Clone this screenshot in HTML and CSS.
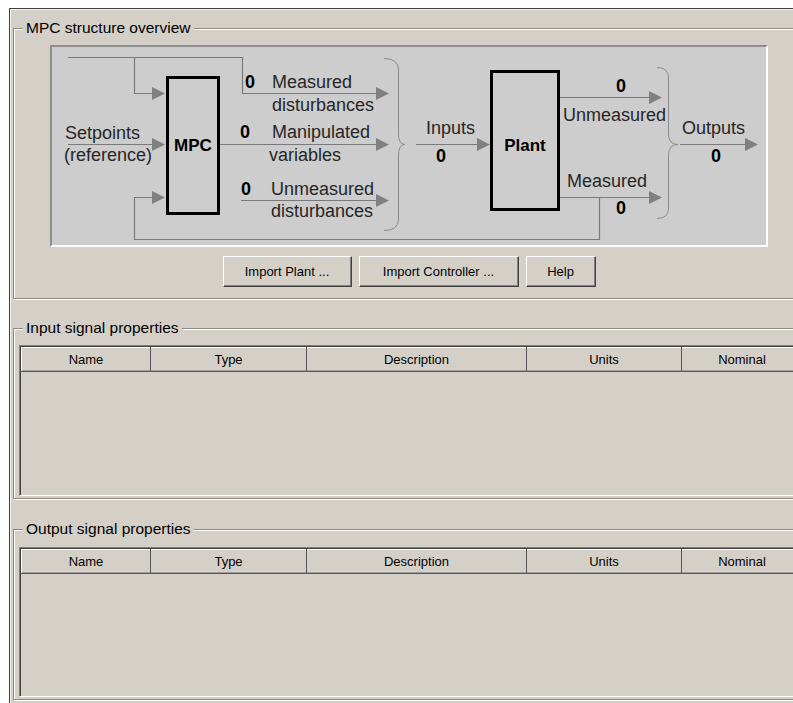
FILE: index.html
```html
<!DOCTYPE html>
<html lang="en">
<head>
    <meta charset="UTF-8">
    <title>MPC structure overview</title>
    <link rel="stylesheet" href="styles.css">
</head>
<body>
<div class="frame">

    <fieldset class="group group-overview">
        <legend>MPC structure overview</legend>

        <div class="diagram">
            <svg width="714" height="198" viewBox="0 0 714 198">
                <g transform="translate(-52 -47)">
                    <!-- wires -->
                    <g class="wire">
                        <path d="M68 57.5 H242.5 V93.5 H377"/>
                        <path d="M134.5 57.5 V93.5 H153"/>
                        <path d="M68 144.5 H153"/>
                        <path d="M220 144.5 H377"/>
                        <path d="M241 200.5 H377"/>
                        <path d="M560 197.5 H599.5 V239.5 H134.5 V197.5 H153"/>
                        <path d="M416 144.5 H478"/>
                        <path d="M560 97.5 H650"/>
                        <path d="M560 197.5 H650"/>
                        <path d="M680 144.5 H746"/>
                    </g>
                    <!-- arrow heads -->
                    <g class="head">
                        <polygon points="152,87 165,93.5 152,100"/>
                        <polygon points="152,138 165,144.5 152,151"/>
                        <polygon points="152,191 165,197.5 152,204"/>
                        <polygon points="376,87 389,93.5 376,100"/>
                        <polygon points="376,138 389,144.5 376,151"/>
                        <polygon points="376,194 389,200.5 376,207"/>
                        <polygon points="477,138 490,144.5 477,151"/>
                        <polygon points="649,91 662,97.5 649,104"/>
                        <polygon points="649,191 662,197.5 649,204"/>
                        <polygon points="745,138 758,144.5 745,151"/>
                    </g>
                    <!-- braces -->
                    <g class="brace">
                        <path d="M384 58.5 Q398.5 58.5 398.5 70 V134 Q398.5 144.5 405 144.5 Q398.5 144.5 398.5 155 V219 Q398.5 230.5 384 230.5"/>
                        <path d="M657 67.5 Q668.5 67.5 668.5 78 V134 Q668.5 144.5 678 144.5 Q668.5 144.5 668.5 155 V208 Q668.5 218.5 657 218.5"/>
                    </g>
                    <!-- blocks -->
                    <rect class="block" x="167.5" y="77.5" width="51" height="136"/>
                    <rect class="block" x="491.5" y="71.5" width="67" height="138"/>
                    <text class="block-name" x="193" y="151">MPC</text>
                    <text class="block-name" x="525" y="151">Plant</text>

                    <!-- labels -->
                    <text class="label" x="65" y="139">Setpoints</text>
                    <text class="label" x="64" y="161">(reference)</text>

                    <text class="count" x="245" y="88">0</text>
                    <text class="label" x="272" y="88">Measured</text>
                    <text class="label" x="272" y="111">disturbances</text>

                    <text class="count" x="240" y="138">0</text>
                    <text class="label" x="272" y="138">Manipulated</text>
                    <text class="label" x="269" y="161">variables</text>

                    <text class="count" x="241" y="195">0</text>
                    <text class="label" x="271" y="195">Unmeasured</text>
                    <text class="label" x="271" y="217">disturbances</text>

                    <text class="label" x="426" y="134">Inputs</text>
                    <text class="count mid" x="441" y="162">0</text>

                    <text class="count mid" x="621" y="92">0</text>
                    <text class="label" x="563" y="121">Unmeasured</text>
                    <text class="label" x="567" y="187">Measured</text>
                    <text class="count mid" x="621" y="214">0</text>

                    <text class="label" x="682" y="134">Outputs</text>
                    <text class="count mid" x="716" y="162">0</text>
                </g>
            </svg>
        </div>

        <div class="actions">
            <button class="btn btn-plant">Import Plant ...</button>
            <button class="btn btn-controller">Import Controller ...</button>
            <button class="btn btn-help">Help</button>
        </div>
    </fieldset>

    <fieldset class="group group-input">
        <legend>Input signal properties</legend>
        <div class="grid grid-input">
            <table>
                <tr>
                    <th class="col-name">Name</th>
                    <th class="col-type">Type</th>
                    <th class="col-desc">Description</th>
                    <th class="col-units">Units</th>
                    <th class="col-nominal">Nominal</th>
                </tr>
            </table>
        </div>
    </fieldset>

    <fieldset class="group group-output">
        <legend>Output signal properties</legend>
        <div class="grid grid-output">
            <table>
                <tr>
                    <th class="col-name">Name</th>
                    <th class="col-type">Type</th>
                    <th class="col-desc">Description</th>
                    <th class="col-units">Units</th>
                    <th class="col-nominal">Nominal</th>
                </tr>
            </table>
        </div>
    </fieldset>

</div>
</body>
</html>
```

FILE: styles.css
```css
* {
    margin: 0;
    padding: 0;
    box-sizing: border-box;
}
html, body {
    height: 100%;
}
body {
    background: #fff;
    overflow: hidden;
    font-family: "Liberation Sans", Arial, sans-serif;
    color: #000;
}
.frame {
    width: 820px;
    height: 720px;
    margin: 8px 0 0 9px;
    border-top: 1px solid #404040;
    border-left: 1px solid #404040;
    box-shadow: inset 1px 1px 0 #f4f2ee;
    background: #d4d0c8;
    padding-top: 10px;
}

/* etched group boxes */
.group {
    width: 800px;
    margin-left: 3px;
    border: 1px solid #8c8a85;
    box-shadow: inset 1px 1px 0 #fff, 1px 1px 0 #fff;
    padding: 0;
}
.group legend {
    margin-left: 9px;
    padding: 0 3px;
    font-size: 15.5px;
    line-height: 18px;
    background: #d4d0c8;
}
.group-overview {
    padding-bottom: 11px;
}
.group-input {
    margin-top: 20px;
    padding-bottom: 2px;
}
.group-output {
    margin-top: 21px;
    padding-bottom: 2px;
}

/* diagram */
.diagram {
    width: 718px;
    height: 202px;
    margin: 8px 0 0 36px;
    background: #cdcdcd;
    border: 2px solid;
    border-color: #8e8e8e #fff #fff #8e8e8e;
}
.diagram svg {
    display: block;
}
.wire {
    fill: none;
    stroke: #7a7a7a;
    stroke-width: 1.2;
}
.head {
    fill: #808080;
}
.brace {
    fill: none;
    stroke: #8a8a8a;
    stroke-width: 1;
}
.block {
    fill: none;
    stroke: #000;
    stroke-width: 3;
}
.block-name {
    font-family: "Liberation Sans", Arial, sans-serif;
    font-size: 17px;
    font-weight: bold;
    text-anchor: middle;
    fill: #000;
}
.label {
    font-family: "Liberation Sans", Arial, sans-serif;
    font-size: 18px;
    fill: #262626;
}
.count {
    font-family: "Liberation Sans", Arial, sans-serif;
    font-size: 18px;
    font-weight: bold;
    fill: #000;
}
.count.mid {
    text-anchor: middle;
}

/* buttons */
.actions {
    width: 718px;
    margin: 9px 0 0 36px;
    display: flex;
    justify-content: center;
    gap: 7px;
}
.btn {
    height: 31px;
    background: #d4d0c8;
    border: 1px solid;
    border-color: #fff #404040 #404040 #fff;
    box-shadow: inset -1px -1px 0 #808080;
    font-family: "Liberation Sans", Arial, sans-serif;
    font-size: 13px;
    color: #000;
}
.btn-plant {
    width: 129px;
}
.btn-controller {
    width: 160px;
}
.btn-help {
    width: 70px;
}

/* property tables */
.grid {
    margin: 8px 0 0 5px;
    border-top: 1px solid #808080;
    border-left: 1px solid #808080;
    border-bottom: 1px solid #fff;
    box-shadow: inset 1px 1px 0 #404040;
    padding: 1px 0 0 1px;
}
.grid-input {
    height: 151px;
}
.grid-output {
    height: 150px;
    margin-top: 9px;
}
.grid table {
    border-collapse: collapse;
    table-layout: fixed;
}
.grid th {
    height: 24px;
    font-weight: normal;
    font-size: 13px;
    text-align: center;
    border-top: 1px solid #fff;
    border-left: 1px solid #fff;
    border-right: 1px solid #555;
    border-bottom: 1px solid #555;
    box-shadow: inset 0 -1px 0 #a0a0a0;
}
.col-name {
    width: 129px;
}
.col-type {
    width: 156px;
}
.col-desc {
    width: 220px;
}
.col-units {
    width: 155px;
}
.col-nominal {
    width: 121px;
}
```
